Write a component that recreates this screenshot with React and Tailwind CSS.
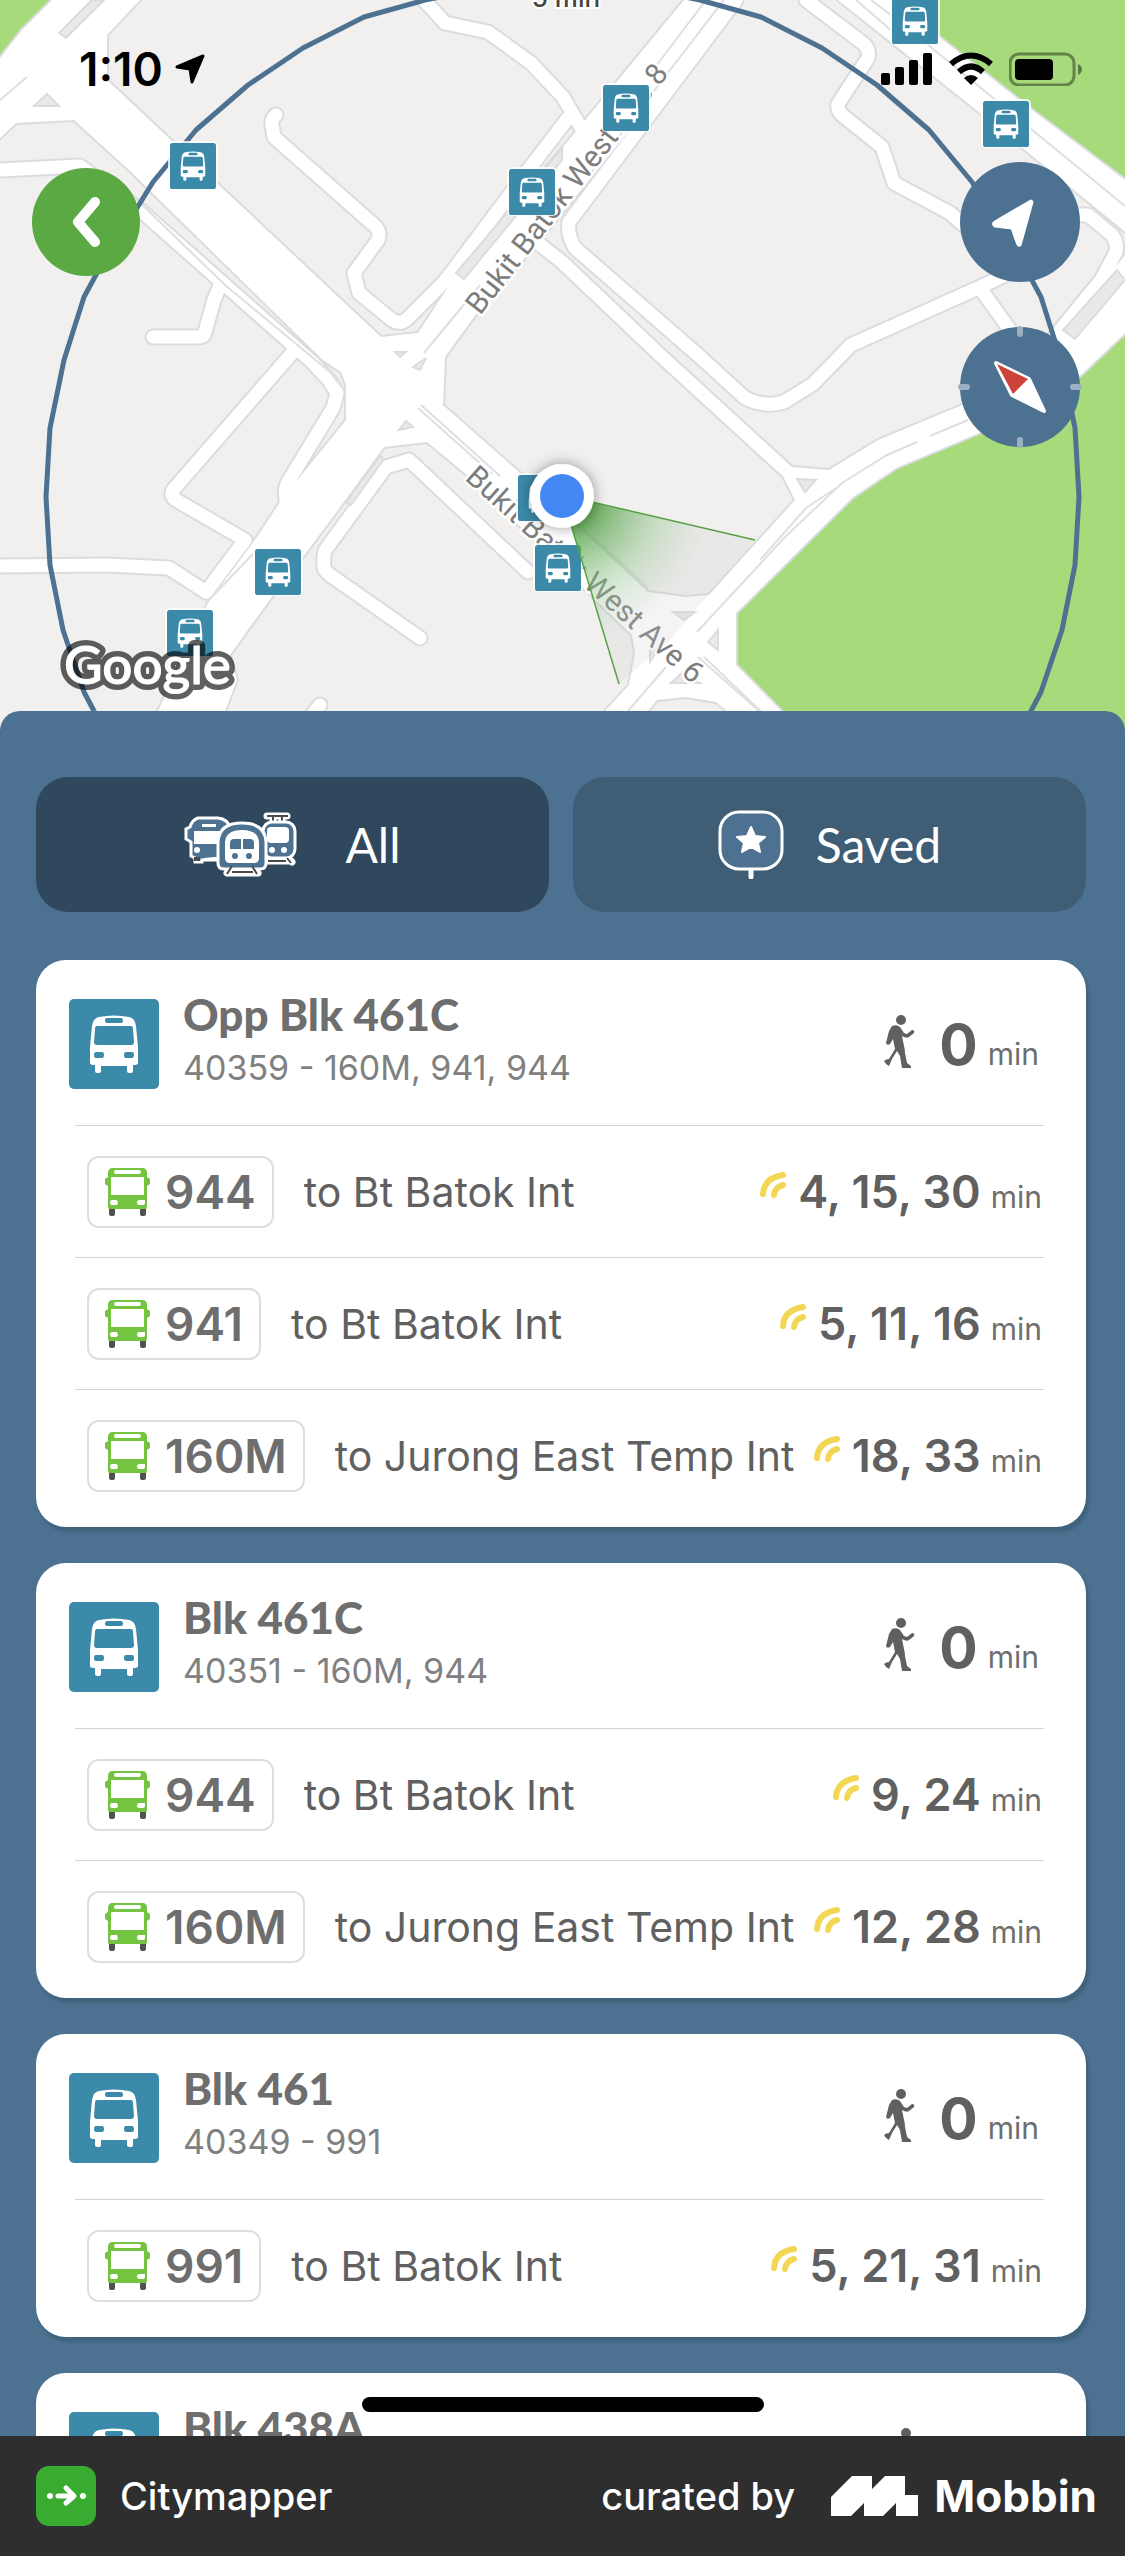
import React, { useState } from 'react';

const stops = [
  {
    id: 'opp-461c',
    name: 'Opp Blk 461C',
    detail: '40359 - 160M, 941, 944',
    walk: 0,
    routes: [
      { number: '944', to: 'Bt Batok Int', times: '4, 15, 30' },
      { number: '941', to: 'Bt Batok Int', times: '5, 11, 16' },
      { number: '160M', to: 'Jurong East Temp Int', times: '18, 33' }
    ]
  },
  {
    id: '461c',
    name: 'Blk 461C',
    detail: '40351 - 160M, 944',
    walk: 0,
    routes: [
      { number: '944', to: 'Bt Batok Int', times: '9, 24' },
      { number: '160M', to: 'Jurong East Temp Int', times: '12, 28' }
    ]
  },
  {
    id: '461',
    name: 'Blk 461',
    detail: '40349 - 991',
    walk: 0,
    routes: [{ number: '991', to: 'Bt Batok Int', times: '5, 21, 31' }]
  },
  {
    id: '438a',
    name: 'Blk 438A',
    routes: []
  }
];

// Wide roads are filled areas, small ones are strokes
const roadAreas = [
  'M52 0H140L107 35V80L381 337L418 333L456 275L562 148L577 130L684 0H735L538 243L477 313L445 357L443 405L519 472L648 592L686 597L709 595L756 543L795 500L783 476L792 467L829 470L878 440L962 405L1065 330L1125 255V333L1081 375L979 433L896 468L853 497L736 613V665L805 735H738L727 711L716 702L686 697L657 700L648 711L630 735H585L605 711L629 685L635 653L632 635L467 475L427 442L384 447L338 510L303 557L271 598L230 655L237 680L216 735H148L158 711L208 603L255 540L280 502L291 488L346 420V385L341 372L323 360L129 170L74 120L16 123L0 138V58L22 30Z',
  'M838 0H891L943 40L1032 110L1125 180V232L1118 226L1025 150L980 113Z'
];

const minorRoads = [
  'M276 115Q271 119 272 125L274 137L375 226Q381 232 378 240L354 273L359 293L392 320Q400 325 407 319L445 281L526 173L568 118',
  'M424 0L445 23L488 32L531 63L563 97L580 126',
  'M0 170L80 166L140 210L225 285L312 362L329 380L337 393L333 408L288 482Q284 490 286 500',
  'M221 283L214 300L205 332Q204 337 199 337H153',
  'M293 352L173 490Q170 496 176 500L245 540L206 592L169 568L108 565L0 566',
  'M528 572L409 460L386 467L326 549Q323 553 324 568Q325 571 330 575L420 638',
  'M320 705L300 730',
  'M538 243L562 262L660 355L790 474',
  'M736 0L569 222Q567 235 575 248L698 355L745 398Q765 408 784 402L813 384L851 345L978 288L1020 268',
  'M980 288L1010 330',
  'M806 0L864 44Q870 50 868 58L838 104Q837 110 842 115L882 147L894 183L950 213L975 235',
  'M1070 215H1088L1112 235Q1118 242 1116 252L1101 280L1052 340'
];

const dividers = [
  'M706 0L650 74', 'M724 0L590 174', 'M424 353L461 308L480 285', 'M418 408L492 474', 'M421 405L500 476',
  'M697 632L785 537L842 483L887 455L917 442', 'M760 560L806 508L836 488', 'M930 436L968 420',
  'M698 657L759 711L780 735', 'M704 657L770 720', 'M666 667L628 711L606 735', 'M871 0L900 22L1036 133L1125 206',
  'M856 0L900 38', 'M129 192L225 285L330 372L344 390', 'M0 100L27 77', 'M255 552L206 603', 'M545 492L648 588'
];

const islands = [
  'M59 33L66 38L104 0H92Z', 'M34 106L47 94L59 106Z', 'M395 352H406L400 357Z', 'M399 430L406 421L413 427Z',
  'M673 612H695L684 620Z', 'M718 630V650L708 642Z', 'M650 643V662L656 653Z', 'M671 683H700L682 673Z',
  'M797 479L816 480L805 492Z', 'M1125 280L1075 339L1063 330L1117 270Z', 'M456 273L464 279L562 160V148Z',
  'M346 502L351 505L384 459L380 456Z', 'M413 367L420 370L426 358Z'
];

const greens = [
  'M0 0H52L22 30L0 58Z',
  'M891 0L943 40L1032 110L1125 180V0Z',
  'M1125 333L1104 355L1081 375L979 433L896 468L853 497L736 613V665L805 735H1125Z'
];

const mapStops = [
  [170, 143], [509, 169], [603, 85], [892, -2], [983, 101], [255, 549], [167, 610], [518, 475], [535, 545]
];

const rangeLine =
  'M94 711L84 692L63 630L50 565L46 497L50 428L64 360L84 297L97 273L153 182L196 130L248 85L303 48L364 17L425 0L495 -14H630L700 0L761 17L822 48L877 85L929 130L972 182L1028 273L1041 297L1061 360L1075 428L1079 497L1075 565L1062 630L1041 692L1031 711L1020 735M94 711L105 735';

const BusTile = (props) => (
  <svg viewBox="0 0 90 90" {...props}>
    <rect width="90" height="90" rx="5" fill="#3b8aaa" />
    <path
      fill="#fff"
      fillRule="evenodd"
      d="M30 18Q45 15 60 18Q66 19 67 27L69 48V64Q69 66 64 66V72Q64 74 61 74H60Q58 74 58 72V67H32V72Q32 74 29 74H28Q26 74 26 72V66Q21 66 21 64V48L23 27Q24 19 30 18ZM38 19Q36 19 36 22Q36 24 38 24H52Q54 24 54 22Q54 19 52 19ZM28 27Q26 27 26 30L25 43Q25 46 28 46H62Q65 46 65 43L64 30Q64 27 62 27ZM27 53Q25 53 25 56Q25 59 27 59H33Q35 59 35 56Q35 53 33 53ZM57 53Q55 53 55 56Q55 59 57 59H63Q65 59 65 56Q65 53 63 53Z"
    />
  </svg>
);

const GreenBus = () => (
  <svg viewBox="0 0 45 48" className="h-12 w-[45px] shrink-0">
    <path fill="#4f5350" d="M4 38H10V46Q10 48 8 48H6Q4 48 4 46ZM35 38H41V46Q41 48 39 48H37Q35 48 35 46Z" />
    <path
      fill="#74c341"
      fillRule="evenodd"
      d="M7 0H38Q41 0 42 4V9L45 11V16L42 18V39Q42 41 40 41H5Q3 41 3 39V18L0 16V11L3 9V4Q4 0 7 0ZM11 2Q9 2 9 4Q9 6 11 6H34Q36 6 36 4Q36 2 34 2ZM6 9V27H39V9ZM7 32Q5 32 5 35Q5 37 7 37H11Q13 37 13 35L12 32ZM34 32Q32 32 32 35Q32 37 34 37H38Q40 37 40 35V32Z"
    />
  </svg>
);

const Walker = () => (
  <svg viewBox="0 0 31 53" className="h-[53px] w-[31px]" fill="#606060">
    <circle cx="17" cy="5" r="5" />
    <path d="M8 11Q13 9 16 12L20 18L23 19L28 15Q31 15 30 18L25 22Q23 24 18 21L20 31Q21 34 21 38L23 48L27 51V53H18L16 41L13 36L8 44L5 51Q2 50 0 46Q2 44 5 44L11 34L9 24L6 29Q3 31 2 28L5 16Z" />
  </svg>
);

const LiveIcon = () => (
  <svg viewBox="0 0 26 26" className="mt-2.5 h-[26px] w-[26px] shrink-0 self-start" fill="none" stroke="#f3d654" strokeWidth="6" strokeLinecap="round">
    <path d="M3 22Q4 6 23 3M14 23Q15 15 23 13" />
  </svg>
);

const TransitIcon = () => (
  <svg viewBox="0 0 113 65" className="h-[65px] w-[113px]">
    {/* bus */}
    <path fill="#4d7191" stroke="#fff" strokeWidth="3" d="M14 6H34Q44 7 46 16V48H18V50H11V46L7 44V30L2 27V17L6 15Q8 8 14 6Z" />
    <path fill="#fff" d="M18 12H32V15H18ZM10 19H40V32H10ZM30 45H40V49H20V46Z" />
    <circle cx="13" cy="38" r="3" fill="#fff" />
    <path fill="#4b4b4b" d="M10 45H16V49H10Z" />
    {/* tram */}
    <path stroke="#fff" strokeWidth="7" strokeLinecap="round" fill="none" d="M83 4H103M89 4V10M98 4V10" />
    <path stroke="#4b4b4b" strokeWidth="2" fill="none" d="M83 4H104M89 5V10M98 5V10" />
    <path stroke="#fff" strokeWidth="7" strokeLinecap="round" d="M82 49H106M103 45L108 50" />
    <rect x="79" y="10" width="32" height="36" rx="9" fill="#4d7191" stroke="#fff" strokeWidth="3" />
    <rect x="83" y="15" width="22" height="16" rx="4" fill="#fff" />
    <circle cx="88" cy="38" r="3" fill="#fff" />
    <circle cx="100" cy="38" r="3" fill="#fff" />
    <path stroke="#4b4b4b" strokeWidth="2" d="M84 49H102M103 46L107 51" />
    {/* train */}
    <path stroke="#fff" strokeWidth="7" strokeLinecap="round" fill="none" d="M44 61H74M48 54L43 61M69 54L74 61" />
    <path fill="#4d7191" stroke="#fff" strokeWidth="3" d="M34 30Q35 11 58 11Q81 11 82 30V51Q82 57 76 57H40Q34 57 34 51Z" />
    <path fill="#fff" d="M41 30Q42 18 58 18Q74 18 75 30V46Q75 51 70 51H46Q41 51 41 46Z" />
    <path fill="#4d7191" d="M50 27H57V37H46V31Q46 27 50 27ZM59 27H66Q70 27 70 31V37H59Z" />
    <circle cx="51" cy="44" r="3" fill="#4d7191" />
    <circle cx="65" cy="44" r="3" fill="#4d7191" />
    <path stroke="#4b4b4b" strokeWidth="2" d="M48 60H69M48 54L43 62M68 54L73 62" />
  </svg>
);

const SavedIcon = () => (
  <svg viewBox="0 0 66 69" className="h-[69px] w-[66px]">
    <path d="M33 58V67" stroke="#fff" strokeWidth="5" strokeLinecap="round" />
    <rect x="2" y="2" width="62" height="57" rx="19" fill="#4d7191" stroke="#fff" strokeWidth="3" />
    <path fill="#fff" stroke="#fff" strokeWidth="2" strokeLinejoin="round" d="M33 17L37 26L47 27L40 33L42 42L33 37L24 42L26 33L19 27L29 26Z" />
  </svg>
);

const CityMap = () => (
  <svg viewBox="0 0 1125 729" preserveAspectRatio="xMidYMid slice" className="absolute inset-0 h-full w-full" role="img" aria-label="Map">
    <defs>
      <radialGradient id="beam" gradientUnits="userSpaceOnUse" cx="562" cy="495" r="150">
        <stop offset="0.2" stopColor="#4a9c3c" stopOpacity="0.85" />
        <stop offset="0.65" stopColor="#8bc083" stopOpacity="0.4" />
        <stop offset="1" stopColor="#c8c8c8" stopOpacity="0.2" />
      </radialGradient>
      <filter id="dotShadow" x="-50%" y="-50%" width="200%" height="200%">
        <feDropShadow dx="0" dy="0" stdDeviation="7" floodOpacity="0.4" />
      </filter>
    </defs>
    <rect width="1125" height="729" fill="#f1f0ef" />
    {greens.map((d) => <path key={d} d={d} fill="#a6da7b" />)}
    <g fill="none" stroke="#dadcdf" strokeLinecap="round" strokeLinejoin="round">
      {roadAreas.map((d) => <path key={d} d={d} strokeWidth="4" />)}
      {minorRoads.map((d) => <path key={d} d={d} strokeWidth="17" />)}
    </g>
    {roadAreas.map((d) => <path key={d} d={d} fill="#fff" />)}
    <g fill="none" stroke="#fff" strokeWidth="13" strokeLinecap="round" strokeLinejoin="round">
      {minorRoads.map((d) => <path key={d} d={d} />)}
    </g>
    <g fill="none" stroke="#dddfe1" strokeWidth="2">
      {dividers.map((d) => <path key={d} d={d} />)}
    </g>
    {islands.map((d) => <path key={d} d={d} fill="#e9e9e9" stroke="#dadcdf" strokeWidth="2" />)}

    <g fontFamily="Roboto, sans-serif" fontSize="30" fill="#7d7d7d" stroke="#fff" strokeWidth="5" strokeLinejoin="round" paintOrder="stroke">
      <text transform="translate(480 316) rotate(-52)">Bukit Batok West Ave 8</text>
      <text transform="translate(464 479) rotate(42)">Bukit Batok West Ave 6</text>
    </g>
    <path d={rangeLine} fill="none" stroke="#4d7191" strokeWidth="5" strokeLinejoin="round" />
    <text x="566" y="7" textAnchor="middle" fontFamily="Inter, sans-serif" fontSize="26" fontWeight="500" fill="#444" stroke="#fff" strokeWidth="4" paintOrder="stroke">5 min</text>

    {mapStops.map(([x, y]) => (
      <g key={x}>
        <rect x={x - 2} y={y - 2} width="50" height="49" rx="5" fill="#fff" opacity="0.8" />
        <BusTile x={x} y={y} width="46" height="46" />
      </g>
    ))}

    <path d="M562 495L755 540L670 640L619 684Z" fill="url(#beam)" />
    <path d="M562 495L755 540M562 495L619 684" stroke="#55a244" strokeWidth="1.5" />
    <circle cx="562" cy="496" r="32" fill="#fff" filter="url(#dotShadow)" />
    <circle cx="562" cy="496" r="22" fill="#4588f5" />

    <g fontFamily="Lato, sans-serif" fontSize="53" fontWeight="500">
      <text x="64" y="684" fill="#000" stroke="#000" strokeWidth="12" strokeLinejoin="round" opacity="0.62">Google</text>
      <text x="64" y="684" fill="#fff" stroke="#fff" strokeWidth="1">Google</text>
    </g>
  </svg>
);

const StatusBar = () => (
  <div className="flex items-center justify-between pt-[42px] pr-[42px] pl-[79px] text-black">
    <div className="flex items-center gap-3">
      <span className="text-[46px] leading-[54px] font-semibold">1:10</span>
      <svg viewBox="0 0 30 30" className="h-[30px] w-[30px]">
        <path d="M28 2L17 28L15 15L2 13Z" stroke="#000" strokeWidth="3" strokeLinejoin="round" />
      </svg>
    </div>
    <div className="flex items-center gap-4">
      <svg viewBox="0 0 52 34" className="h-[34px] w-[52px]">
        <rect x="0" y="21" width="9" height="12" rx="2" />
        <rect x="14" y="15" width="9" height="18" rx="2" />
        <rect x="28" y="8" width="9" height="25" rx="2" />
        <rect x="42" y="1" width="9" height="32" rx="2" />
      </svg>
      <svg viewBox="0 0 44 34" className="h-[34px] w-[44px]">
        <g fill="none" stroke="#000" strokeWidth="6">
          <path d="M2 12Q22 -5 42 12" />
          <path d="M10 20Q22 9 34 20" />
        </g>
        <path d="M22 33L15 26Q22 20 29 26Z" />
      </svg>
      <svg viewBox="0 0 74 34" className="h-[34px] w-[74px]">
        <rect x="1" y="2" width="64" height="31" rx="9" fill="none" stroke="#000" strokeOpacity="0.4" strokeWidth="3" />
        <rect x="6" y="7" width="38" height="21" rx="4" />
        <path d="M69 12Q73 14 73 17Q73 21 69 23Z" fillOpacity="0.45" />
      </svg>
    </div>
  </div>
);

const MapControls = () => (
  <div className="flex items-start justify-between pt-[66px] pr-[45px] pl-8">
    <button aria-label="Back" className="mt-1.5 flex h-27 w-27 items-center justify-center rounded-full bg-[#5ba943]">
      <svg viewBox="0 0 30 50" className="h-[50px] w-[30px]">
        <path d="M24 5L7 25L24 45" fill="none" stroke="#fff" strokeWidth="10" strokeLinecap="round" strokeLinejoin="round" />
      </svg>
    </button>
    <div className="flex flex-col gap-[45px]">
      <button aria-label="My location" className="h-30 w-30 rounded-full bg-[#4d7191]">
        <svg viewBox="0 0 120 120">
          <path d="M72 40L60 83Q58 84 57 80L52 66L35 64Q32 62 35 60L71 39Z" fill="#fff" stroke="#fff" strokeWidth="3" strokeLinejoin="round" />
        </svg>
      </button>
      <button aria-label="Compass" className="h-30 w-30 rounded-full bg-[#4d7191]">
        <svg viewBox="0 0 120 120" className="overflow-visible">
          <path d="M60 2V7M60 113V118M1 60H7M113 60H119" stroke="#9bb0c3" strokeWidth="6" strokeLinecap="round" />
          <path d="M36 36L69 52L84 84L52 68Z" fill="#fff" stroke="#fff" strokeWidth="4" strokeLinejoin="round" />
          <path d="M37 37L68 52L53 67Z" fill="#cc4339" />
        </svg>
      </button>
    </div>
  </div>
);

const RouteRow = ({ route }) => (
  <li className="mr-[42px] ml-[39px] flex h-33 items-center border-t border-[#d4d4d4] pr-0.5 pl-3">
    <span className="flex h-18 shrink-0 items-center gap-[15px] rounded-xl border-2 border-[#dededb] pr-4 pl-4">
      <GreenBus />
      <span className="text-[46px] leading-[60px] font-semibold text-[#6e6e6e]">{route.number}</span>
    </span>
    <span className="ml-[30px] text-[41px] leading-[60px] whitespace-nowrap text-[#606060]">to {route.to}</span>
    <span className="ml-auto flex items-baseline">
      <LiveIcon />
      <span className="ml-3 text-[45px] leading-[60px] font-semibold whitespace-nowrap text-[#606060]">{route.times}</span>
      <span className="ml-2.5 text-[30px] text-[#6e6e6e]">min</span>
    </span>
  </li>
);

const StopCard = ({ stop }) => (
  <article className="rounded-[30px] bg-white pb-1.5 shadow-[3px_5px_3px_rgba(40,75,90,0.35)]">
    <div className="flex h-[165px] items-start pt-[39px] pr-11 pl-[33px]">
      <BusTile className="h-[90px] w-[90px] shrink-0" />
      <div className="-mt-2.5 ml-6">
        <h2 className="font-['Lato',sans-serif] text-[44px] leading-[50px] font-black text-[#6e6e6e]">{stop.name}</h2>
        {stop.detail && <p className="mt-1 text-[34px] leading-[50px] text-[#808080]">{stop.detail}</p>}
      </div>
      <div className="mt-4 mr-[3px] ml-auto flex min-w-[150px] items-start">
        <Walker />
        {stop.walk !== undefined && (
          <p className="ml-6 flex items-baseline leading-[60px]">
            <span className="text-[57px] font-bold text-[#606060]">{stop.walk}</span>
            <span className="ml-2.5 text-[30px] text-[#6e6e6e]">min</span>
          </p>
        )}
      </div>
    </div>
    <ul>
      {stop.routes.map((route) => (
        <RouteRow key={route.number} route={route} />
      ))}
    </ul>
  </article>
);

const tabs = [
  { id: 'all', label: 'All', icon: <TransitIcon />, gap: 'gap-12' },
  { id: 'saved', label: 'Saved', icon: <SavedIcon />, gap: 'gap-8' }
];

const App = () => {
  const [tab, setTab] = useState('all');

  return (
    <div className="flex h-screen flex-col overflow-hidden bg-[#4d7191] font-['Inter',sans-serif]">
      <header className="relative h-[729px] shrink-0 overflow-hidden">
        <CityMap />
        <div className="relative">
          <StatusBar />
          <MapControls />
        </div>
      </header>

      <main className="relative -mt-[18px] min-h-0 flex-1 overflow-hidden rounded-t-[20px] bg-[#4d7191] pt-[66px] pr-[39px] pl-9">
        <div className="grid grid-cols-2 gap-6">
          {tabs.map((item) => (
            <button
              key={item.id}
              onClick={() => setTab(item.id)}
              className={`flex h-[135px] items-center justify-center rounded-[32px] font-['Lato',sans-serif] text-[48px] text-white ${item.gap} ${
                tab === item.id ? 'bg-[#30485d]' : 'bg-[#3f5e76]'
              }`}
            >
              {item.icon}
              {item.label}
            </button>
          ))}
        </div>

        <div className="mt-12 flex flex-col gap-9">
          {stops.map((stop) => (
            <StopCard key={stop.id} stop={stop} />
          ))}
        </div>
        <div className="absolute bottom-6 left-1/2 h-[15px] w-[402px] -translate-x-1/2 rounded-full bg-black" />
      </main>

      <footer className="flex h-30 shrink-0 items-center bg-[#2e2e2e] pr-7 pl-9 text-white">
        <svg viewBox="0 0 60 60" className="h-15 w-15">
          <rect width="60" height="60" rx="13" fill="#38ab30" />
          <path d="M22 30H37M30 22L38 30L30 37" fill="none" stroke="#fff" strokeWidth="5" strokeLinecap="round" strokeLinejoin="round" />
          <circle cx="14" cy="30" r="3" fill="#fff" />
          <circle cx="47" cy="30" r="3" fill="#fff" />
        </svg>
        <span className="ml-6 text-[38px] leading-[48px] font-medium">Citymapper</span>
        <span className="ml-auto text-[38px] leading-[48px] font-medium">curated by</span>
        <svg viewBox="0 0 87 40" className="ml-9 h-10 w-[87px]">
          <path d="M0 21L21 0H41V13L54 0H74V19H87V40H65V27L52 40H33V27L20 40H0Z" fill="#fff" />
        </svg>
        <span className="ml-4 text-[44px] leading-[48px] font-bold">Mobbin</span>
      </footer>
    </div>
  );
};

export default App;
